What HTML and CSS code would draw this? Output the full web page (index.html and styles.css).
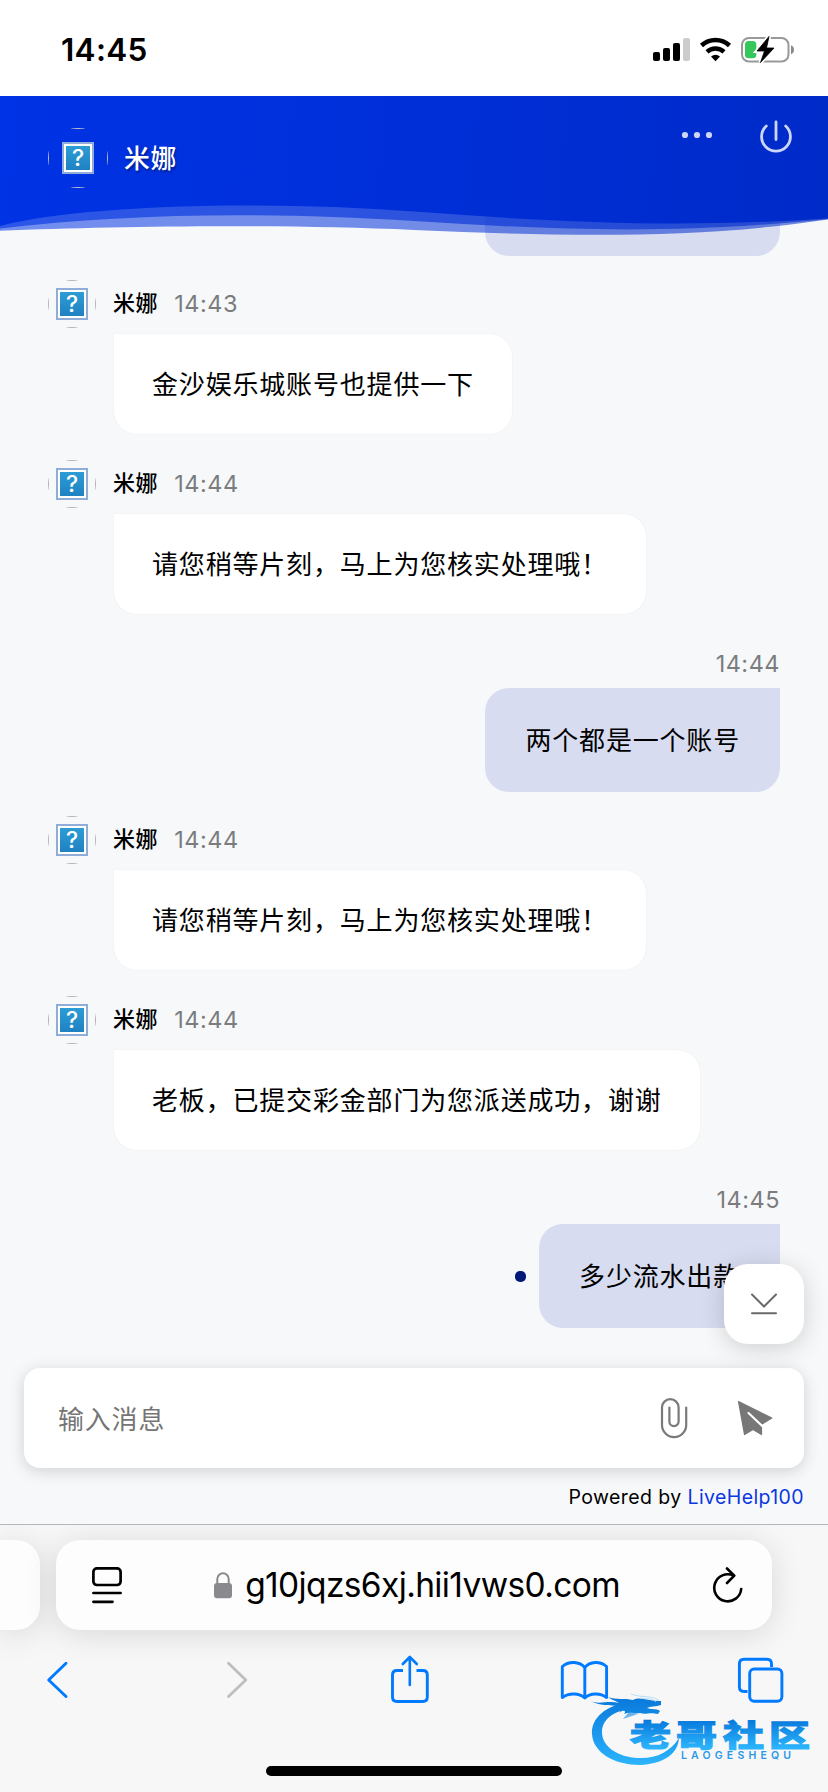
FILE: index.html
```html
<!DOCTYPE html>
<html lang="zh-CN">
<head>
<meta charset="utf-8">
<title>米娜</title>
<link rel="stylesheet" href="styles.css">
</head>
<body>
<svg class="defs" aria-hidden="true">
  <defs>
    <clipPath id="round48"><circle cx="24" cy="24" r="24"/></clipPath>
    <clipPath id="round60"><circle cx="30" cy="30" r="30"/></clipPath>
  </defs>
  <symbol id="ring" viewBox="0 0 48 48"><g clip-path="url(#round48)"><rect x="0.5" y="0.5" width="47" height="47" fill="none" stroke="#b0b0b2"/></g></symbol>
</svg>

<div class="status">
  <span class="clock">14:45</span>
  <svg class="status-icons" width="144" height="30" viewBox="652 35 144 30">
    <rect x="653" y="52" width="7" height="9" rx="2"/>
    <rect x="663" y="48" width="7" height="13" rx="2"/>
    <rect x="673" y="43" width="7" height="18" rx="2"/>
    <rect x="683" y="38" width="7" height="23" rx="2" fill="#ccc"/>
    <path d="M701.5 45.5 A20.5 20.5 0 0 1 729.5 45.5" fill="none" stroke="#000" stroke-width="4.6"/>
    <path d="M707 51.8 A12.6 12.6 0 0 1 724 51.8" fill="none" stroke="#000" stroke-width="4.4"/>
    <path d="M711 56.5 Q715.500 52.800 720 56.5 L715.500 61.200Z"/>
    <rect x="742" y="38" width="46.500" height="23.500" rx="7" fill="none" stroke="#999" stroke-width="2"/>
    <path d="M791 45.200 Q794 46.500 794 49.700 Q794 53 791 54.200Z" fill="#8a8a8a"/>
    <rect x="745" y="41" width="11.300" height="17.300" rx="3.500" fill="#35c759"/>
    <path d="M769 36.500 L757 51 H764.500 L760.500 62.500 L774 48 H766.500Z" stroke="#fff" stroke-width="4"/>
    <path d="M769 36.500 L757 51 H764.500 L760.500 62.500 L774 48 H766.500Z" stroke="#000" stroke-width=".8" stroke-linejoin="round"/>
  </svg>
</div>

<main class="app">
  <header class="header">
    <svg class="wave" width="828" height="140" viewBox="0 96 828 140">
      <defs><linearGradient id="blue" gradientUnits="userSpaceOnUse" x1="0" y1="96" x2="828" y2="180"><stop offset="0" stop-color="#0033e5"/><stop offset=".5" stop-color="#002fd8"/><stop offset="1" stop-color="#002bc9"/></linearGradient></defs>
      <g fill="url(#blue)">
        <path fill-opacity=".54" d="M0 96 V230.800 C120 226 280 224 414 230 C560 236 690 240 828 219.500 V96Z"/>
        <path fill-opacity=".61" d="M0 96 V228.500 C120 214 260 211 414 221 C568 231 680 234 828 219 V96Z"/>
        <path d="M0 96 V226 C80 205 260 200 414 211.500 C568 223 680 228 828 218.500 V96Z"/>
      </g>
    </svg>
    <div class="agent-face">
      <svg class="ring" viewBox="0 0 60 60"><g clip-path="url(#round60)"><rect x=".5" y=".5" width="59" height="59" fill="none" stroke="#c3c5cc"/></g></svg>
      <span class="glyph">?</span>
    </div>
    <h1 class="agent-title">米娜</h1>
    <svg class="header-icons" width="114" height="36" viewBox="680 119 114 36">
      <g fill="#cdd6f7"><circle cx="685" cy="135" r="3.100"/><circle cx="697" cy="135" r="3.100"/><circle cx="709" cy="135" r="3.100"/></g>
      <path d="M766.300 126 A14.400 14.400 0 1 0 785.700 126 M776 122 V139.500" fill="none" stroke="#cdd6f7" stroke-width="2.800" stroke-linecap="round"/>
    </svg>
  </header>

  <section class="chat">
    <div class="bubble mine cut"></div>

    <article class="msg">
      <div class="face"><svg class="ring"><use href="#ring"/></svg><span class="glyph">?</span></div>
      <div class="meta"><b>米娜</b><time>14:43</time></div>
      <div class="bubble">金沙娱乐城账号也提供一下</div>
    </article>
    <article class="msg">
      <div class="face"><svg class="ring"><use href="#ring"/></svg><span class="glyph">?</span></div>
      <div class="meta"><b>米娜</b><time>14:44</time></div>
      <div class="bubble">请您稍等片刻，马上为您核实处理哦！</div>
    </article>
    <article class="msg-mine">
      <time>14:44</time>
      <div class="bubble mine">两个都是一个账号</div>
    </article>
    <article class="msg">
      <div class="face"><svg class="ring"><use href="#ring"/></svg><span class="glyph">?</span></div>
      <div class="meta"><b>米娜</b><time>14:44</time></div>
      <div class="bubble">请您稍等片刻，马上为您核实处理哦！</div>
    </article>
    <article class="msg">
      <div class="face"><svg class="ring"><use href="#ring"/></svg><span class="glyph">?</span></div>
      <div class="meta"><b>米娜</b><time>14:44</time></div>
      <div class="bubble">老板，已提交彩金部门为您派送成功，谢谢</div>
    </article>
    <article class="msg-mine">
      <time>14:45</time>
      <div class="sent"><i class="dot"></i><div class="bubble mine">多少流水出款</div></div>
    </article>
  </section>

  <footer class="compose">
    <div class="field">
      <span class="hint">输入消息</span>
      <svg width="114" height="42" viewBox="660 1397 114 42">
        <path d="M686.200 1407.500 V1425 A12.100 12.100 0 0 1 662 1425 V1407.500 A8.300 8.300 0 0 1 678.600 1407.500 V1421.500 A4.600 4.600 0 0 1 669.400 1421.500 V1407.500" fill="none" stroke="#7a7a7a" stroke-width="2.200" stroke-linecap="round"/>
        <path d="M738.500 1401.500 L771.800 1418 L761.500 1424.300 V1434.500 L753 1429.500 L744.500 1434.500Z" fill="#777" stroke="#777" stroke-width="1.200" stroke-linejoin="round"/>
        <path d="M748.500 1413 L763.500 1427.200" stroke="#fff" stroke-width="2.200" stroke-linecap="round"/>
      </svg>
    </div>
    <p class="powered">Powered by <a>LiveHelp100</a></p>
  </footer>

  <button class="to-bottom" aria-label="到底部">
    <svg width="28" height="24" viewBox="750 1292 28 24"><path d="M752 1294.500 L764 1306.500 L776 1294.500 M752 1313.300 H776" fill="none" stroke="#6a6a6a" stroke-width="2" stroke-linecap="round"/></svg>
  </button>
</main>

<nav class="browser">
  <div class="tabs">
    <div class="tab-prev"></div>
    <div class="address">
      <svg width="30" height="37" viewBox="92 1567 30 37" fill="none" stroke="#000" stroke-width="2.700" stroke-linecap="round"><rect x="93.400" y="1568.400" width="27.200" height="16.600" rx="3.500"/><path d="M93.400 1593 H120.600 M93.400 1601.800 H112.500"/></svg>
      <div class="url">
        <svg width="18" height="27" viewBox="214 1572 18 27"><rect x="214" y="1583" width="18" height="15.300" rx="3" fill="#8a898e"/><path d="M217.300 1584 V1579 A5.700 5.700 0 0 1 228.700 1579 V1584" fill="none" stroke="#8a898e" stroke-width="2"/></svg>
        <span class="host">g10jqzs6xj.hii1vws0.com</span>
      </div>
      <svg width="32" height="38" viewBox="712 1564 32 38" fill="none" stroke="#000" stroke-width="2.600" stroke-linecap="round" stroke-linejoin="round"><path d="M733.500 1573.600 A13.500 13.500 0 1 0 741.200 1587 M727 1566.500 L734.300 1573.600 L727 1581"/></svg>
    </div>
  </div>
  <svg class="toolbar" width="828" height="56" viewBox="0 1652 828 56" fill="none" stroke="#007aff" stroke-width="2.900" stroke-linecap="round" stroke-linejoin="round">
    <path d="M66 1663.300 L48.700 1680 L66 1696.500"/>
    <path d="M228.500 1663.300 L245.800 1680 L228.500 1696.500" stroke="#bfbfbf"/>
    <path d="M403 1670.500 H397 Q392.500 1670.500 392.500 1675 V1697 Q392.500 1701.500 397 1701.500 H422.800 Q427.300 1701.500 427.300 1697 V1675 Q427.300 1670.500 422.800 1670.500 H416.500" stroke-linecap="butt"/>
    <path d="M409.800 1685 V1657.500 M402.800 1664 L409.800 1657 L416.800 1664" stroke-width="2.600"/>
    <path d="M584.800 1698 C579.500 1693 569 1692.500 562.300 1697.500 V1666.500 C569 1660.800 579.500 1661.300 584.800 1667.500 C590 1661.300 600 1660.800 606.600 1666.500 V1697.500 C600 1692.500 590 1693 584.800 1698Z M584.800 1668 V1697"/>
    <path d="M747.500 1691.500 H744 Q739.400 1691.500 739.400 1687 V1664 Q739.400 1659.300 744 1659.300 H767 Q771.500 1659.300 771.500 1664 V1667" stroke-linecap="butt"/>
    <rect x="749.700" y="1669" width="32.200" height="32.200" rx="4.500"/>
  </svg>
  <div class="home"></div>

  <svg class="watermark" width="248" height="100" viewBox="0 0 248 100">
    <defs><linearGradient id="wm" gradientUnits="userSpaceOnUse" x1="0" y1="20" x2="0" y2="84"><stop offset="0" stop-color="#0a7bdc"/><stop offset=".75" stop-color="#22a4f4"/><stop offset="1" stop-color="#2cb4fb"/></linearGradient>
    <linearGradient id="wt" gradientUnits="userSpaceOnUse" x1="0" y1="-26" x2="0" y2="2"><stop offset="0" stop-color="#0879dc"/><stop offset="1" stop-color="#2bb4fb"/></linearGradient></defs>
    <g fill="url(#wm)">
      <path d="M50 22 C26 25 11 38 12 54 C13 73 35 85 60 85 C82 84 98 75 99 58 C90 72 76 79 58 78 C38 77 22 67 22 52 C22 40 33 31 50 29Z"/>
      <path d="M10 21 C19 25 29 20 39 23 C34 20 30 19 28 17 C37 20 44 18 53 20 C61 16 69 22 81 21 L81 25 C76 27 70 26 67 28 C72 30 76 28 80 31 L78 34 C69 32 66 35 60 33 C54 34 51 31 44 34 C47 31 43 29 39 33 L43 27 C31 24 22 27 10 21Z"/>
      <path d="M43 39 L49 32 L58 34Z" opacity=".6"/>
    </g>
    <path d="M51 14 C61 18 70 15 79 20 M60 18 C68 19 72 18 76 22" stroke="#abd8f5" fill="none" stroke-width=".8"/>
    <g class="wm-name" fill="url(#wt)" stroke="url(#wt)" stroke-width="1.100">
      <text transform="translate(50 66) scale(1.390 1)">老</text>
      <text transform="translate(96 66) scale(1.390 1)">哥</text>
      <text transform="translate(143 66) scale(1.390 1)">社</text>
      <text transform="translate(189 66) scale(1.390 1)">区</text>
    </g>
    <text class="wm-latin" x="101" y="78.800" textLength="110" fill="#2998ea">LAOGESHEQU</text>
  </svg>
</nav>
</body>
</html>
```
FILE: styles.css
```css
* { box-sizing: border-box; }
body {
  margin: 0;
  width: 828px;
  height: 1792px;
  display: flex;
  flex-direction: column;
  overflow: hidden;
  background: #fff;
  color: #000;
  font-family: Inter, "Noto Sans CJK SC", sans-serif;
}
svg { display: block; flex: none; }
.defs { position: absolute; width: 0; height: 0; }

.status {
  height: 96px;
  flex: none;
  display: flex;
  justify-content: space-between;
  padding: 35px 32px 0 61px;
}
.clock { font-size: 31.5px; line-height: 30px; font-weight: 600; letter-spacing: .3px; }

.app {
  position: relative;
  height: 1428px;
  flex: none;
  display: flex;
  flex-direction: column;
  background: #f7f8fa;
}
.header {
  position: relative;
  z-index: 2;
  height: 104px;
  flex: none;
  display: flex;
  align-items: flex-start;
  padding: 32px 34px 0 48px;
}
.wave { position: absolute; left: 0; top: 0; }
.agent-face, .face {
  position: relative;
  display: grid;
  place-items: center;
}
.agent-face { width: 60px; height: 60px; }
.face { width: 48px; height: 48px; grid-row: 1; }
.ring { position: absolute; inset: 0; width: 100%; height: 100%; }
.glyph {
  position: relative;
  width: 32px;
  height: 32px;
  border: 2px solid #8fadd8;
  box-shadow: inset 0 0 0 2px #fff;
  background: linear-gradient(#2d9fd6, #1e7fc1);
  color: #fff;
  font-size: 23px;
  line-height: 28px;
  font-weight: 500;
  text-align: center;
}
.agent-title {
  position: relative;
  flex: 1;
  margin: 0 0 0 16px;
  font-size: 25.800px;
  line-height: 61px;
  font-weight: 500;
  letter-spacing: .8px;
  color: #fff;
  text-shadow: 1px 2px 2px rgba(0, 0, 0, .35);
}
.header-icons { position: relative; margin-top: -9px; }

.chat {
  height: 1144px;
  flex: none;
  display: flex;
  flex-direction: column;
  padding: 0 48px;
}
.bubble {
  width: max-content;
  height: 102px;
  padding: 0 38.500px 0 38px;
  border: 1px solid #f3f4f5;
  border-radius: 0 24px 24px 24px;
  background: #fff;
  font-size: 26px;
  line-height: 102px;
  letter-spacing: .82px;
  white-space: nowrap;
}
.bubble.mine {
  height: 104px;
  padding: 0 40px;
  border: 0;
  border-radius: 24px 0 24px 24px;
  background: #d8dcf0;
  line-height: 106px;
}
.bubble.cut {
  width: 295px;
  height: 56px;
  flex: none;
  align-self: flex-end;
  border-radius: 0 0 24px 24px;
}
.msg {
  display: grid;
  grid-template: 48px 102px / 48px 1fr;
  column-gap: 17px;
  row-gap: 5px;
  margin-top: 24px;
  padding-bottom: 1px;
}
.msg .bubble { grid-column: 2; }
.meta { display: flex; align-items: center; gap: 16px; padding-bottom: 2px; font-size: 22px; }
.meta b { font-weight: 500; letter-spacing: .6px; line-height: 30px; margin-top: -1px; }
time { font-size: 23.500px; letter-spacing: .5px; color: #7b7c7e; }
.msg-mine {
  display: flex;
  flex-direction: column;
  align-items: flex-end;
  margin-top: 34px;
}
.msg-mine time { line-height: 28px; margin-bottom: 10px; }
.sent { display: flex; align-items: center; gap: 13px; }
.dot { width: 11px; height: 11px; border-radius: 5px; background: #001878; }

.compose { flex: 1; padding: 24px 24px 0; }
.field {
  height: 100px;
  display: flex;
  align-items: center;
  justify-content: space-between;
  padding: 0 30px 0 34px;
  border-radius: 16px;
  background: #fff;
  box-shadow: 0 3px 16px rgba(0, 0, 0, .16);
}
.hint { font-size: 26px; letter-spacing: .8px; color: #757575; margin-top: -2px; }
.powered {
  margin: 16px 0 0;
  text-align: right;
  font-size: 19.500px;
  line-height: 26px;
  letter-spacing: .4px;
}
.powered a { color: #0a37e0; }
.to-bottom {
  position: absolute;
  right: 24px;
  top: 1168px;
  width: 80px;
  height: 80px;
  display: grid;
  place-items: center;
  padding: 0;
  border: 0;
  border-radius: 24px;
  background: #fff;
  box-shadow: 0 4px 24px rgba(0, 0, 0, .17);
}

.browser {
  position: relative;
  height: 268px;
  flex: none;
  display: flex;
  flex-direction: column;
  border-top: 1px solid #b5b8bb;
  background: #f7f7f7;
  overflow: hidden;
}
.tabs { display: flex; gap: 16px; padding-top: 15px; }
.tab-prev, .address {
  height: 90px;
  background: #fdfdfd;
  box-shadow: 0 4px 32px rgba(0, 0, 0, .13);
}
.tab-prev { width: 40px; border-radius: 0 24px 24px 0; }
.address {
  width: 716px;
  display: flex;
  align-items: center;
  justify-content: space-between;
  padding: 0 28px 0 36px;
  border-radius: 24px;
}
.url { display: flex; align-items: center; gap: 13px; }
.host { font-size: 33.500px; line-height: 44px; letter-spacing: -.63px; }
.toolbar { margin-top: 22px; }
.home {
  width: 296px;
  height: 10px;
  margin: 58px auto 0;
  border-radius: 5px;
  background: #000;
}
.watermark { position: absolute; right: 0; top: 155px; }
.wm-name { font: 900 29.500px "Noto Sans CJK SC", sans-serif; }
.wm-latin { font: 600 10.500px Inter, sans-serif; }
```
